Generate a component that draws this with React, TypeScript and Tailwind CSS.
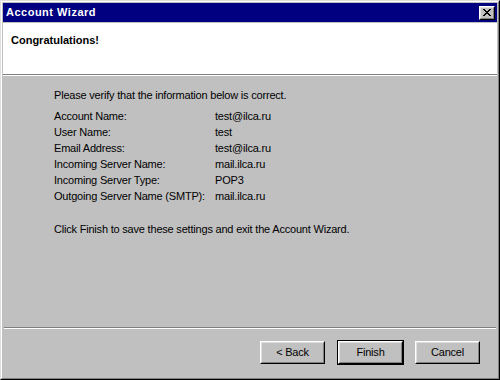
import React from 'react';

const rows: [string, string][] = [
  ['Account Name:', 'test@ilca.ru'],
  ['User Name:', 'test'],
  ['Email Address:', 'test@ilca.ru'],
  ['Incoming Server Name:', 'mail.ilca.ru'],
  ['Incoming Server Type:', 'POP3'],
  ['Outgoing Server Name (SMTP):', 'mail.ilca.ru'],
];

// pixel map of the classic close glyph
const closeGlyph = [
  'XX....XX',
  '.XX..XX.',
  '..XXXX..',
  '...XX...',
  '..XXXX..',
  '.XX..XX.',
  'XX....XX',
];

const CloseIcon = () => (
  <svg width="8" height="7" viewBox="0 0 8 7" shapeRendering="crispEdges">
    {closeGlyph.flatMap((line, y) =>
      line.split('').map((c, x) =>
        c === 'X' ? <rect key={`${x}-${y}`} x={x} y={y} width="1" height="1" fill="#000" /> : null
      )
    )}
  </svg>
);

const Bevel = ({ className = '', children }: { className?: string; children: React.ReactNode }) => (
  <div className={`border border-t-white border-l-white border-b-black border-r-black ${className}`}>
    <div className="h-full w-full border border-t-[#dfdfdf] border-l-[#dfdfdf] border-b-[#808080] border-r-[#808080] bg-[#c0c0c0] flex items-center justify-center">
      {children}
    </div>
  </div>
);

const WinButton = ({ label, isDefault }: { label: string; isDefault?: boolean }) => {
  const btn = (
    <Bevel className="w-[65px] h-[23px]">
      <span className="text-[11px] tracking-[-0.2px] text-black leading-none">{label}</span>
    </Bevel>
  );
  if (!isDefault) return btn;
  return <div className="border border-black">{btn}</div>;
};

export default function App() {
  return (
    <div className="w-[500px] h-[380px] bg-[#c0c0c0] font-['Liberation_Sans',Arial,sans-serif] text-black">
      <div className="w-full h-full border border-t-[#dfdfdf] border-l-[#dfdfdf] border-b-black border-r-black">
        <div className="w-full h-full border border-t-white border-l-white border-b-[#808080] border-r-[#808080] p-px flex flex-col">
          {/* title bar */}
          <div className="h-[19px] bg-[#000080] flex items-center justify-between pl-[3px] pr-[2px]">
            <span className="text-[11px] font-bold tracking-[0.5px] text-white leading-none">Account Wizard</span>
            <Bevel className="w-[16px] h-[14px]">
              <CloseIcon />
            </Bevel>
          </div>

          {/* header */}
          <div className="mt-px h-[52px] bg-white border-b border-b-[#808080] pt-[9px] pl-[8px]">
            <div className="text-[11px] font-bold leading-[16px]">Congratulations!</div>
          </div>
          <div className="h-px bg-white" />

          {/* body */}
          <div className="flex-1 pt-[11px] pl-[51px] text-[11px] tracking-[-0.2px] leading-[16px]">
            <p>Please verify that the information below is correct.</p>
            <div className="mt-[5px] grid grid-cols-[161px_1fr]">
              {rows.map(([k, v]) => (
                <React.Fragment key={k}>
                  <span>{k}</span>
                  <span>{v}</span>
                </React.Fragment>
              ))}
            </div>
            <p className="mt-[17px]">Click Finish to save these settings and exit the Account Wizard.</p>
          </div>

          {/* separator */}
          <div className="mx-px h-px bg-[#808080]" />
          <div className="mx-px h-px bg-white" />

          {/* buttons */}
          <div className="h-[48px] flex items-start justify-end pr-[17px] pt-[11px]">
            <div className="mt-px mr-[12px]">
              <WinButton label="< Back" />
            </div>
            <div className="mr-[11px]">
              <WinButton label="Finish" isDefault />
            </div>
            <div className="mt-px">
              <WinButton label="Cancel" />
            </div>
          </div>
        </div>
      </div>
    </div>
  );
}
